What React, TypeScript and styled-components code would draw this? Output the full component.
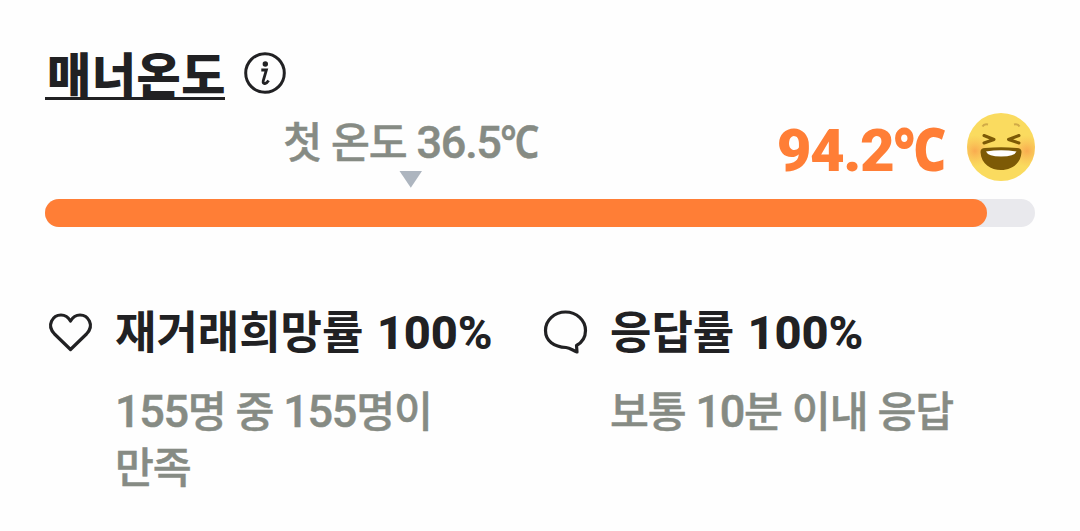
import React from 'react';
import styled, { createGlobalStyle } from 'styled-components';

const GlobalStyle = createGlobalStyle`
  * {
    box-sizing: border-box;
  }

  body {
    margin: 0;
    background: #fefefe;
    color: #212123;
    font-family: 'Noto Sans CJK KR', sans-serif;
  }
`;

const Card = styled.main`
  width: 1080px;
  height: 531px;
  padding: 45px 45px 0;
  overflow: hidden;
`;

const TitleRow = styled.div`
  display: flex;
  align-items: flex-start;
  gap: 19px;
  height: 64px;
`;

const Title = styled.h1`
  margin: 0;
  width: 180px;
  height: 55px;
  padding-left: 2px;
  border-bottom: 3px solid #212123;
  font-size: 48px;
  font-weight: 900;
  line-height: 55px;
  letter-spacing: 0.6px;
  white-space: nowrap;
`;

const InfoIcon = styled.svg`
  margin-top: 7px;
  width: 42px;
  height: 42px;
`;

const TemperatureRow = styled.div`
  display: flex;
  justify-content: space-between;
  height: 90px;
  padding-left: 238px;
`;

const FirstTemperature = styled.div`
  display: flex;
  flex-direction: column;
  align-items: center;
  width: 256px;
  padding-top: 3px;
`;

const Marker = styled.svg`
  width: 24px;
  height: 18px;
  margin-top: 3px;
`;

const CurrentTemperature = styled.div`
  display: flex;
  gap: 20px;
  color: #ff7e36;
`;

const Face = styled.svg`
  width: 70px;
  height: 70px;
  margin: 3px -1px 0 0;
`;

const Num = styled.span<{ $size: number; $weight: number; $spacing: number }>`
  font-family: Roboto, sans-serif;
  font-size: ${props => props.$size}px;
  font-weight: ${props => props.$weight};
  line-height: 1;
  letter-spacing: ${props => props.$spacing}px;
  word-spacing: 0;
`;

const Celsius = styled.span<{ $size: number; $weight: number; $pull: number }>`
  display: inline-block;
  margin-left: ${props => props.$pull}px;
  font-family: 'Noto Sans', sans-serif;
  font-size: ${props => props.$size}px;
  font-weight: ${props => props.$weight};
  line-height: 1;
  letter-spacing: 0;
  transform: scaleX(0.86);
  transform-origin: right;
`;

const Degree = styled.div`
  padding-top: 9px;
  line-height: 80px;
  white-space: nowrap;
`;

const Muted = styled.p`
  margin: 0;
  color: #868b84;
  font-size: 42.3px;
  font-weight: 500;
  line-height: 56px;
  letter-spacing: -1.1px;
  word-spacing: 1.5px;
  white-space: nowrap;
  -webkit-text-stroke: 0.5px #868b84;
`;

const Track = styled.div`
  height: 28px;
  border-radius: 14px;
  background: #e9e9ed;
`;

const Fill = styled.div`
  height: 100%;
  border-radius: 14px;
  background: #ff7e36;
`;

const Stats = styled.div`
  display: grid;
  grid-template-columns: 495px 495px;
  margin-top: 75px;
`;

const Stat = styled.section`
  display: grid;
  grid-template-columns: 70px 1fr;
`;

const StatIcon = styled.svg`
  width: 50px;
  height: 50px;
  margin-top: 4px;
`;

const StatTitle = styled.h2`
  margin: 0 0 23px;
  font-size: 45px;
  font-weight: 700;
  line-height: 56px;
  word-spacing: 3px;
  white-space: nowrap;
`;

const App: React.FC = () => {
  const temperature = 94.2;

  const small = (value: string) => (
    <Num $size={45} $weight={500} $spacing={-1.3}>{value}</Num>
  );

  const percent = (value: string) => (
    <Num $size={47} $weight={800} $spacing={-0.1}>{value}</Num>
  );

  return (
    <>
      <GlobalStyle />
      <Card>
        <TitleRow>
          <Title>매너온도</Title>
          <InfoIcon viewBox="0 0 42 42" fill="none">
            <circle cx="21" cy="21" r="19.3" stroke="#212123" strokeWidth="3" />
            <circle cx="21.3" cy="12" r="2.7" fill="#212123" />
            <path d="M17.3 18 H22.4 L19.3 28.5 Q18.6 31.8 20.8 31.6 Q23 31 24.6 28.4" stroke="#212123" strokeWidth="2.8" />
          </InfoIcon>
        </TitleRow>

        <TemperatureRow>
          <FirstTemperature>
            <Muted>
              첫 온도 {small('36.5')}
              <Celsius $size={45} $weight={600} $pull={-7}>℃</Celsius>
            </Muted>
            <Marker viewBox="0 0 24 18">
              <path d="M0.5 0 H23 L11.8 16.8 Z" fill="#adb5bf" />
            </Marker>
          </FirstTemperature>
          <CurrentTemperature>
            <Degree>
              <Num $size={60} $weight={900} $spacing={-1.5}>{temperature}</Num>
              <Celsius $size={60} $weight={900} $pull={-8}>℃</Celsius>
            </Degree>
            <Face viewBox="0 0 70 70" fill="none">
              <defs>
                <radialGradient id="blush">
                  <stop offset="0" stopColor="#f99b4a" stopOpacity="0.75" />
                  <stop offset="1" stopColor="#f9b052" stopOpacity="0" />
                </radialGradient>
                <clipPath id="head">
                  <circle cx="35" cy="35" r="34" />
                </clipPath>
              </defs>
              <circle cx="35" cy="35" r="34" fill="#fadb5f" />
              <g clipPath="url(#head)">
                <circle cx="9" cy="39" r="16" fill="url(#blush)" />
                <circle cx="61" cy="39" r="16" fill="url(#blush)" />
              </g>
              <path d="M16.5 14.5 Q18 11.5 22 12.5 M48 12.5 Q52 11.5 53.5 14.5" stroke="#d0aa48" strokeWidth="2" />
              <path d="M18 23.5 L28 27.5 L18 31 M53 23.5 L42.5 27.5 L53 31" stroke="#7d5a06" strokeWidth="3" strokeLinecap="round" strokeLinejoin="round" />
              <path d="M14.5 40 Q14.5 36 19 36 Q35 34.5 51 36 Q55.5 36 55.5 40 C54.5 64 15.5 64 14.5 40Z" fill="#7d5a06" />
              <path d="M20 39.5 Q35 37 50.5 39.5 Q48.5 44.5 35 44.5 Q22 44.5 20 39.5Z" fill="#fff" />
            </Face>
          </CurrentTemperature>
        </TemperatureRow>

        <Track>
          <Fill style={{ width: `${temperature + 1}%` }} />
        </Track>

        <Stats>
          <Stat>
            <StatIcon viewBox="0 0 50 50" fill="none">
              <path d="M25.5 43.5 L9.5 28 C1 19 8 9 16 9 C20 9 23.5 11.5 25.5 15 C27.5 11.5 31 9 35 9 C43 9 50 19 41.5 28Z" stroke="#212123" strokeWidth="3.2" strokeLinejoin="round" />
            </StatIcon>
            <div>
              <StatTitle>재거래희망률 {percent('100%')}</StatTitle>
              <Muted>
                {small('155')}명 중 {small('155')}명이
                <br />
                만족
              </Muted>
            </div>
          </Stat>
          <Stat>
            <StatIcon viewBox="0 0 50 50" fill="none">
              <path d="M36.5 39.5 L37 46 C33 44.5 30 42 26 41.5 C14 41 5.5 35 5.5 24.5 C5.5 14 14.5 6 25.5 6 C36.5 6 45.5 14 45.5 24.5 C45.5 31 42 36.5 36.5 39.5Z" stroke="#212123" strokeWidth="3.2" strokeLinejoin="round" />
            </StatIcon>
            <div>
              <StatTitle>응답률 {percent('100%')}</StatTitle>
              <Muted>보통 {small('10')}분 이내 응답</Muted>
            </div>
          </Stat>
        </Stats>
      </Card>
    </>
  );
};

export default App;
